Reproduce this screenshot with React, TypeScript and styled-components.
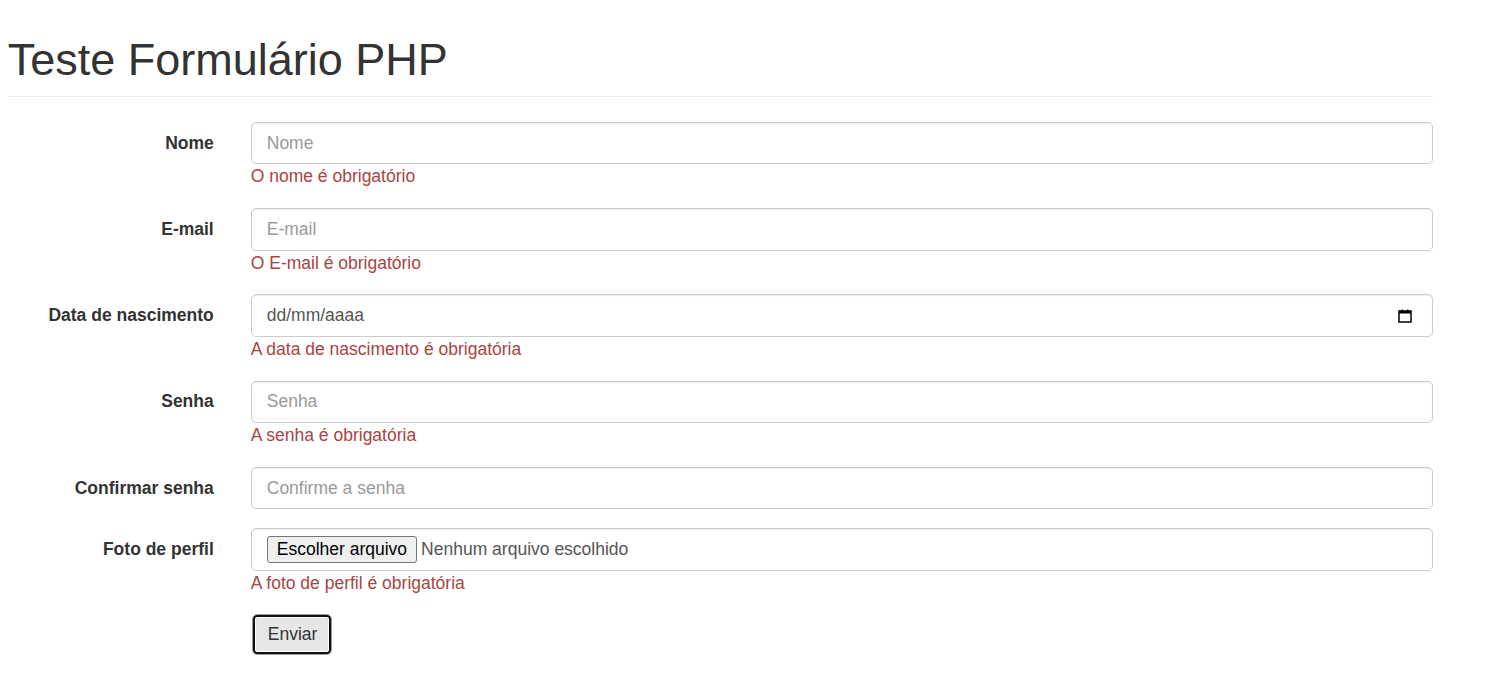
import React from "react";
import styled, { createGlobalStyle } from "styled-components";

const GlobalStyle = createGlobalStyle`
  html, body {
    margin: 0;
    padding: 0;
    background: #fff;
  }
  body {
    font-family: "Liberation Sans", Arial, sans-serif;
    font-size: 17.5px;
    line-height: 25px;
    color: #333;
  }
  * {
    box-sizing: border-box;
  }
`;

const Container = styled("div")`
  width: 1425px;
  margin-left: 7.75px;
  padding-top: 35px;
`;

const PageHeader = styled("div")`
  padding-bottom: 11.25px;
  margin-bottom: 25px;
  border-bottom: 1px solid #eee;
`;

const Title = styled("h1")`
  margin: 0;
  font-size: 45px;
  font-weight: 500;
  line-height: 49.5px;
  color: #333;
`;

const FormGroup = styled("div")`
  display: grid;
  grid-template-columns: 206px 1182px;
  column-gap: 37px;
  margin-bottom: 18.75px;
`;

const Label = styled("label")`
  padding-top: 8.75px;
  text-align: right;
  font-weight: bold;
  color: #333;
`;

const Control = styled("div")`
  display: flex;
  flex-direction: column;
`;

const Input = styled("input")`
  display: block;
  width: 100%;
  height: 42.5px;
  padding: 7.5px 15px;
  font-family: inherit;
  font-size: 17.5px;
  line-height: 25px;
  color: #555;
  background: #fff;
  border: 1px solid #ccc;
  border-radius: 5px;
  box-shadow: inset 0 1px 1px rgba(0, 0, 0, 0.075);
  outline: none;

  &::placeholder {
    color: #999;
  }
`;

const FakeField = styled("div")`
  display: flex;
  align-items: center;
  justify-content: space-between;
  width: 100%;
  height: 42.5px;
  padding: 0 ${(p: { padRight?: number }) => p.padRight ?? 15}px 0 15px;
  color: #555;
  background: #fff;
  border: 1px solid #ccc;
  border-radius: 5px;
  box-shadow: inset 0 1px 1px rgba(0, 0, 0, 0.075);
`;

const FileRow = styled("div")`
  display: flex;
  align-items: center;
  gap: 4px;
`;

const FileButton = styled("span")`
  display: inline-block;
  height: 27px;
  padding: 0 9px;
  line-height: 25px;
  color: #000;
  background: #efefef;
  border: 1px solid #767676;
  border-radius: 3px;
`;

const FileText = styled("span")`
  color: #555;
`;

const ErrorText = styled("span")`
  display: block;
  color: #a94442;
  line-height: 25px;
`;

const SubmitButton = styled("button")`
  width: 80px;
  height: 41px;
  margin-left: 1px;
  padding: 0 15px;
  font-family: inherit;
  font-size: 17.5px;
  line-height: 25px;
  color: #333;
  text-align: left;
  background: #e6e6e6;
  border: 1px solid #9a9a9a;
  border-radius: 5px;
  box-shadow: inset 0 0 0 2px #111, inset 0 0 0 3px #fff;
`;

const CalendarIcon = () => (
  <svg width="14" height="14" viewBox="0 0 14 14">
    <rect x="1" y="2" width="12" height="11" fill="none" stroke="#000" strokeWidth="1.5" />
    <rect x="1" y="2" width="12" height="2.5" fill="#000" />
    <rect x="3.5" y="0.5" width="1.5" height="2" fill="#000" />
    <rect x="9" y="0.5" width="1.5" height="2" fill="#000" />
  </svg>
);

type FieldRowProps = {
  label: string;
  error?: string;
  children: React.ReactNode;
};

const FieldRow = ({ label, error, children }: FieldRowProps) => (
  <FormGroup>
    <Label>{label}</Label>
    <Control>
      {children}
      {error && <ErrorText>{error}</ErrorText>}
    </Control>
  </FormGroup>
);

const App = () => (
  <>
    <GlobalStyle />
    <Container>
      <PageHeader>
        <Title>Teste Formulário PHP</Title>
      </PageHeader>
      <form onSubmit={(e) => e.preventDefault()}>
        <FieldRow label="Nome" error="O nome é obrigatório">
          <Input type="text" placeholder="Nome" />
        </FieldRow>
        <FieldRow label="E-mail" error="O E-mail é obrigatório">
          <Input type="text" placeholder="E-mail" />
        </FieldRow>
        <FieldRow label="Data de nascimento" error="A data de nascimento é obrigatória">
          <FakeField padRight={20}>
            <span>dd/mm/aaaa</span>
            <CalendarIcon />
          </FakeField>
        </FieldRow>
        <FieldRow label="Senha" error="A senha é obrigatória">
          <Input type="password" placeholder="Senha" />
        </FieldRow>
        <FieldRow label="Confirmar senha">
          <Input type="password" placeholder="Confirme a senha" />
        </FieldRow>
        <FieldRow label="Foto de perfil" error="A foto de perfil é obrigatória">
          <FakeField>
            <FileRow>
              <FileButton>Escolher arquivo</FileButton>
              <FileText>Nenhum arquivo escolhido</FileText>
            </FileRow>
          </FakeField>
        </FieldRow>
        <FormGroup>
          <span />
          <Control>
            <div>
              <SubmitButton type="submit">Enviar</SubmitButton>
            </div>
          </Control>
        </FormGroup>
      </form>
    </Container>
  </>
);

export default App;
